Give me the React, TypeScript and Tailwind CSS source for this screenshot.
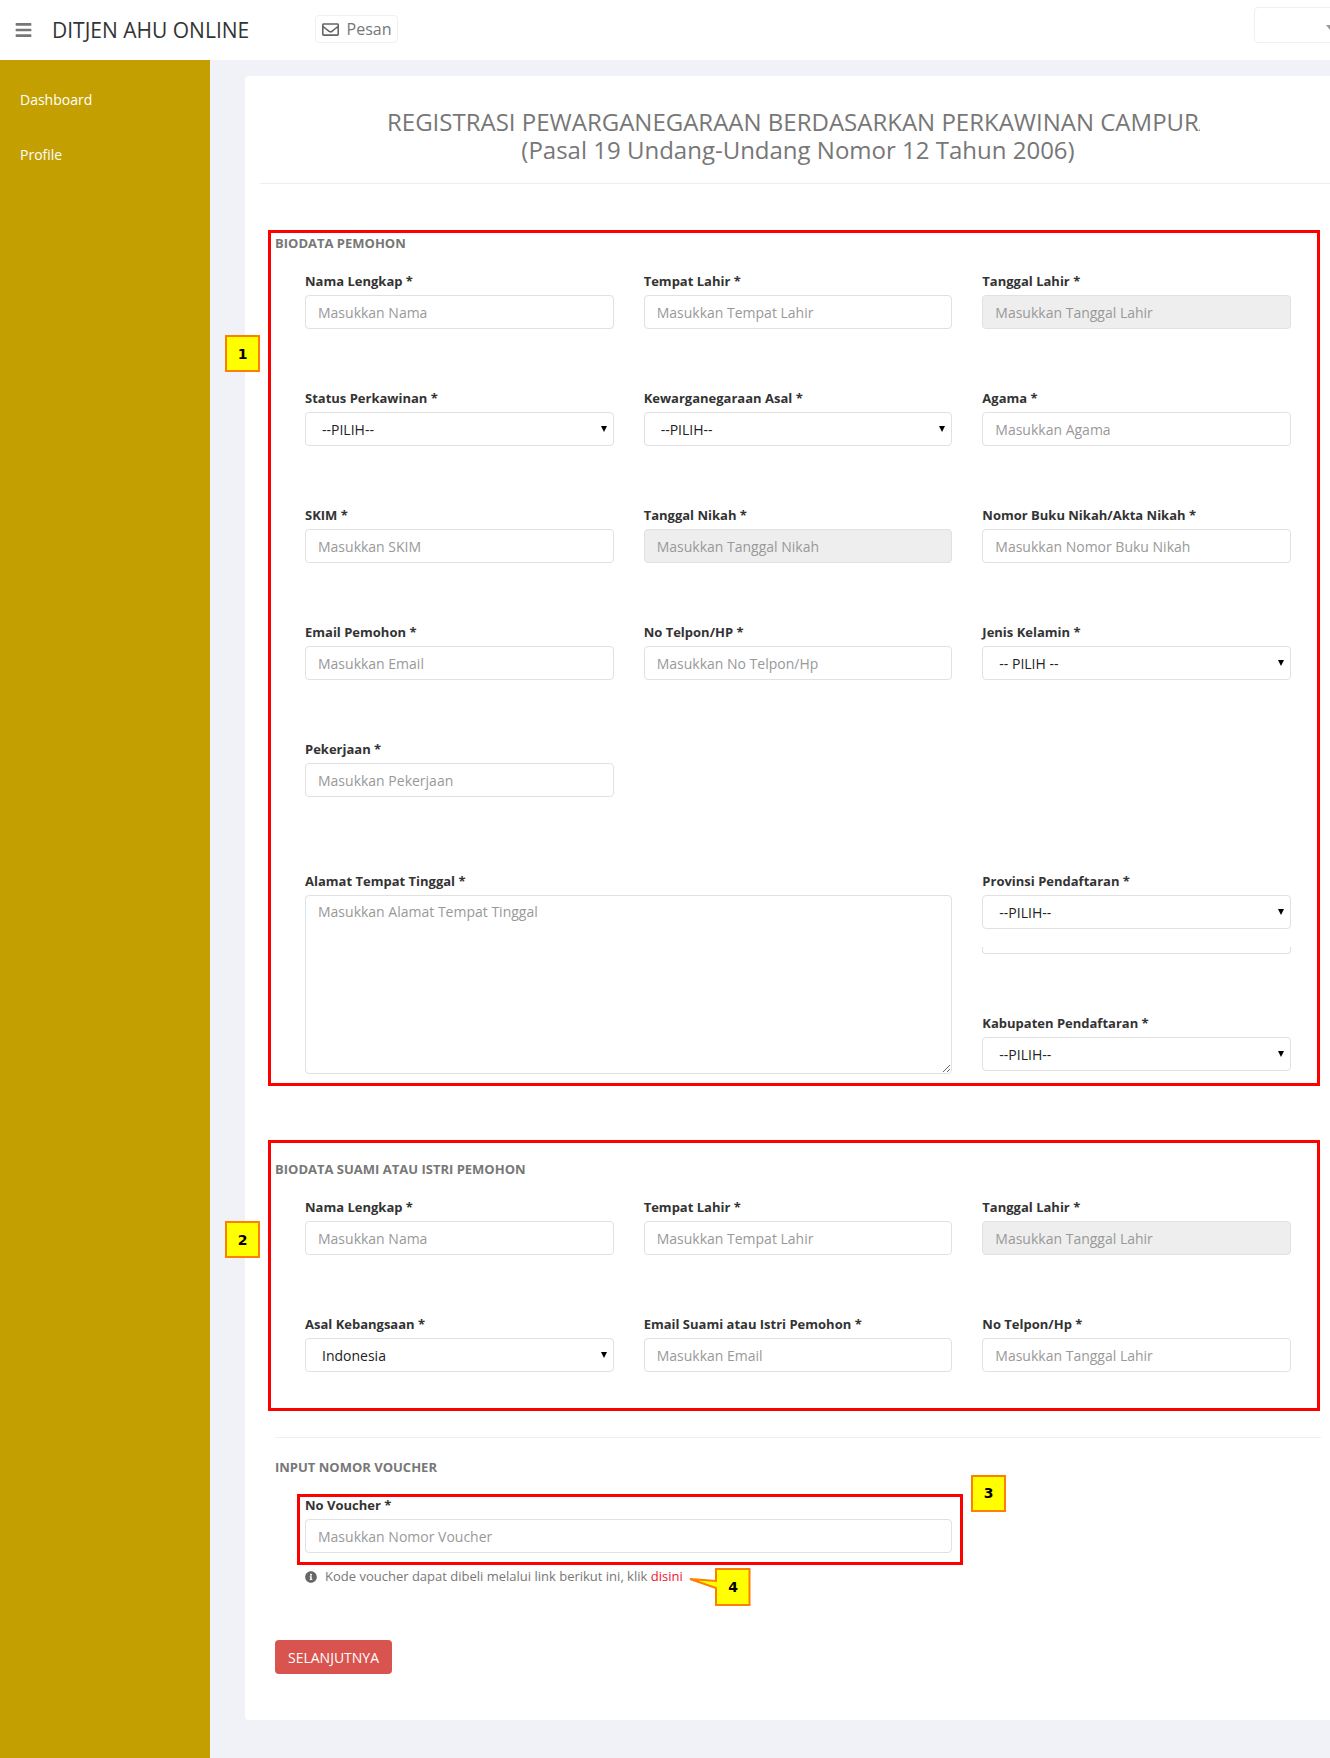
import { FaBars, FaInfoCircle, FaRegEnvelope } from "react-icons/fa";

type FieldProps = {
  label: string;
  placeholder?: string;
  disabled?: boolean;
  options?: string;
};

const inputClass =
  "block w-full h-[34px] px-3 rounded-[4px] border border-[#e1e1e1] text-[14px] text-[#333] bg-white outline-none placeholder:text-[#999] disabled:bg-[#eeeeee]";

function Field({ label, placeholder, disabled, options }: FieldProps) {
  return (
    <div>
      <label className="block h-[20px] mb-[3px] text-[13px] leading-[18px] font-bold text-[#333]">
        {label}
      </label>
      {options ? (
        <div className="relative">
          <select className="block w-full h-[34px] pl-[16px] pr-6 rounded-[4px] border border-[#e1e1e1] bg-white text-[14px] text-[#222] appearance-none">
            <option>{options}</option>
          </select>
          <span className="absolute right-[7px] top-[14px] w-0 h-0 border-x-[3px] border-t-[6px] border-x-transparent border-t-black" />
        </div>
      ) : (
        <input className={inputClass} placeholder={placeholder} disabled={disabled} />
      )}
    </div>
  );
}

function Badge({ n, className }: { n: number; className: string }) {
  return (
    <div
      className={`absolute w-[35px] h-[37px] flex items-center justify-center bg-[#ffff00] border-2 border-[#ff8000] text-[14px] font-bold text-black font-['DejaVu_Sans',sans-serif] ${className}`}
    >
      {n}
    </div>
  );
}

function SectionTitle({ children }: { children: string }) {
  return <h4 className="h-[17px] text-[13px] leading-[17px] font-bold text-[#777]">{children}</h4>;
}

export default function App() {
  return (
    <div className="min-h-[1758px] flex flex-col bg-[#f0f2f7] font-['Open_Sans',sans-serif] overflow-hidden">
      {/* top bar */}
      <header className="h-[60px] bg-white flex items-center shrink-0">
        <FaBars className="ml-[15px] text-[#777] w-[17px] h-[18px]" />
        <span className="ml-[20px] mt-[2px] text-[21px] text-[#333] w-[263px]">DITJEN AHU ONLINE</span>
        <button className="h-[28px] w-[83px] -mt-[2px] flex items-center justify-center gap-[8px] border border-[#f0f0f0] rounded-[4px] text-[16px] text-[#777]">
          <FaRegEnvelope className="w-[17px] h-[17px] text-[#666]" />
          Pesan
        </button>
        <div className="ml-auto -mr-[10px] relative h-[36px] w-[86px] -mt-[10px] border border-[#f0f0f0] rounded-[4px]">
          <span className="absolute right-[5px] top-[17px] w-0 h-0 border-x-[4px] border-t-[5px] border-x-transparent border-t-[#999]" />
        </div>
      </header>

      <div className="flex flex-1">
        <aside className="w-[210px] shrink-0 bg-[#c49f02] pt-[30px] text-[14px] text-white">
          <div className="pl-[20px] h-[20px] leading-[20px]">Dashboard</div>
          <div className="pl-[20px] h-[20px] leading-[20px] mt-[35px]">Profile</div>
        </aside>

        <main className="flex-1 min-w-0 pl-[35px] pt-4 overflow-hidden">
          <div className="w-[1100px] bg-white rounded-[4px] pb-[46px]">
            {/* judul */}
            <div className="ml-[15px] h-[108px] border-b border-[#eeeeee] pt-[32px] text-[24px] leading-[28px] text-[#777]">
              <div className="ml-[127px] w-[813px] overflow-hidden whitespace-nowrap">
                REGISTRASI PEWARGANEGARAAN BERDASARKAN PERKAWINAN CAMPURAN
              </div>
              <div className="w-[1076px] text-center">(Pasal 19 Undang-Undang Nomor 12 Tahun 2006)</div>
            </div>

            {/* biodata pemohon */}
            <section className="relative ml-[23px] mt-[46px] w-[1052px] border-[3px] border-[#ff0000] pt-[2px] pl-[34px] pr-[26px] pb-[9px]">
              <Badge n={1} className="-left-[46px] top-[102px] pt-[1px]" />
              <div className="-ml-[30px]">
                <SectionTitle>BIODATA PEMOHON</SectionTitle>
              </div>
              <div className="mt-[20px] grid grid-cols-3 gap-x-[30px] gap-y-[60px]">
                <Field label="Nama Lengkap *" placeholder="Masukkan Nama" />
                <Field label="Tempat Lahir *" placeholder="Masukkan Tempat Lahir" />
                <Field label="Tanggal Lahir *" placeholder="Masukkan Tanggal Lahir" disabled />
                <Field label="Status Perkawinan *" options="--PILIH--" />
                <Field label="Kewarganegaraan Asal *" options="--PILIH--" />
                <Field label="Agama *" placeholder="Masukkan Agama" />
                <Field label="SKIM *" placeholder="Masukkan SKIM" />
                <Field label="Tanggal Nikah *" placeholder="Masukkan Tanggal Nikah" disabled />
                <Field label="Nomor Buku Nikah/Akta Nikah *" placeholder="Masukkan Nomor Buku Nikah" />
                <Field label="Email Pemohon *" placeholder="Masukkan Email" />
                <Field label="No Telpon/HP *" placeholder="Masukkan No Telpon/Hp" />
                <Field label="Jenis Kelamin *" options="-- PILIH --" />
                <Field label="Pekerjaan *" placeholder="Masukkan Pekerjaan" />
              </div>
              <div className="mt-[75px] grid grid-cols-3 gap-x-[30px]">
                <div className="col-span-2">
                  <label className="block h-[20px] mb-[3px] text-[13px] leading-[18px] font-bold text-[#333]">
                    Alamat Tempat Tinggal *
                  </label>
                  <textarea
                    className="block w-full h-[179px] px-3 py-[5px] rounded-[4px] border border-[#e1e1e1] text-[14px] outline-none placeholder:text-[#999]"
                    placeholder="Masukkan Alamat Tempat Tinggal"
                  />
                </div>
                <div>
                  <Field label="Provinsi Pendaftaran *" options="--PILIH--" />
                  <div className="mt-[18px] h-[7px] rounded-b-[4px] border-x border-b border-[#e1e1e1]" />
                  <div className="mt-[60px]">
                    <Field label="Kabupaten Pendaftaran *" options="--PILIH--" />
                  </div>
                </div>
              </div>
            </section>

            {/* biodata suami / istri */}
            <section className="relative ml-[23px] mt-[54px] w-[1052px] border-[3px] border-[#ff0000] pt-[18px] pl-[34px] pr-[26px] pb-[36px]">
              <Badge n={2} className="-left-[46px] top-[78px] pt-[1px]" />
              <div className="-ml-[30px]">
                <SectionTitle>BIODATA SUAMI ATAU ISTRI PEMOHON</SectionTitle>
              </div>
              <div className="mt-[20px] grid grid-cols-3 gap-x-[30px] gap-y-[60px]">
                <Field label="Nama Lengkap *" placeholder="Masukkan Nama" />
                <Field label="Tempat Lahir *" placeholder="Masukkan Tempat Lahir" />
                <Field label="Tanggal Lahir *" placeholder="Masukkan Tanggal Lahir" disabled />
                <Field label="Asal Kebangsaan *" options="Indonesia" />
                <Field label="Email Suami atau Istri Pemohon *" placeholder="Masukkan Email" />
                <Field label="No Telpon/Hp *" placeholder="Masukkan Tanggal Lahir" />
              </div>
            </section>

            <div className="ml-[30px] mt-[26px] w-[1046px] border-t border-[#eeeeee]" />

            {/* voucher */}
            <div className="ml-[30px] mt-[21px]">
              <SectionTitle>INPUT NOMOR VOUCHER</SectionTitle>
            </div>
            <div className="relative ml-[52px] mt-[18px] w-[666px] border-[3px] border-[#ff0000] pl-[5px] pr-[8px] pb-[9px]">
              <Badge n={3} className="left-[671px] -top-[22px]" />
              <label className="block h-[16px] mb-[6px] text-[13px] leading-[16px] font-bold text-[#333]">
                No Voucher *
              </label>
              <input className={inputClass} placeholder="Masukkan Nomor Voucher" />
            </div>

            <div className="relative ml-[60px] mt-[3px] h-[17px] flex items-center text-[13px] text-[#777]">
              <FaInfoCircle className="w-[12px] h-[12px] text-[#666] mr-[8px]" />
              <span>
                Kode voucher dapat dibeli melalui link berikut ini, klik <span className="text-[#f0142f]">disini</span>
              </span>
              {/* callout 4 */}
              <div className="absolute left-[384px] top-0 w-[62px] h-[38px]">
                <svg viewBox="0 0 62 38" className="absolute inset-0 w-[62px] h-[38px]">
                  <path
                    d="M27 1 H60.5 V37 H27 V20 L1 11 L27 13 Z"
                    fill="#ffff00"
                    stroke="#ff8000"
                    strokeWidth="2"
                  />
                </svg>
                <span className="absolute left-[27px] w-[34px] top-0 h-[38px] flex items-center justify-center text-[14px] font-bold text-black font-['DejaVu_Sans',sans-serif]">
                  4
                </span>
              </div>
            </div>

            <button className="ml-[30px] mt-[55px] block w-[117px] h-[34px] rounded-[4px] bg-[#d9534f] text-[14px] text-white">
              SELANJUTNYA
            </button>
          </div>
        </main>
      </div>
    </div>
  );
}
